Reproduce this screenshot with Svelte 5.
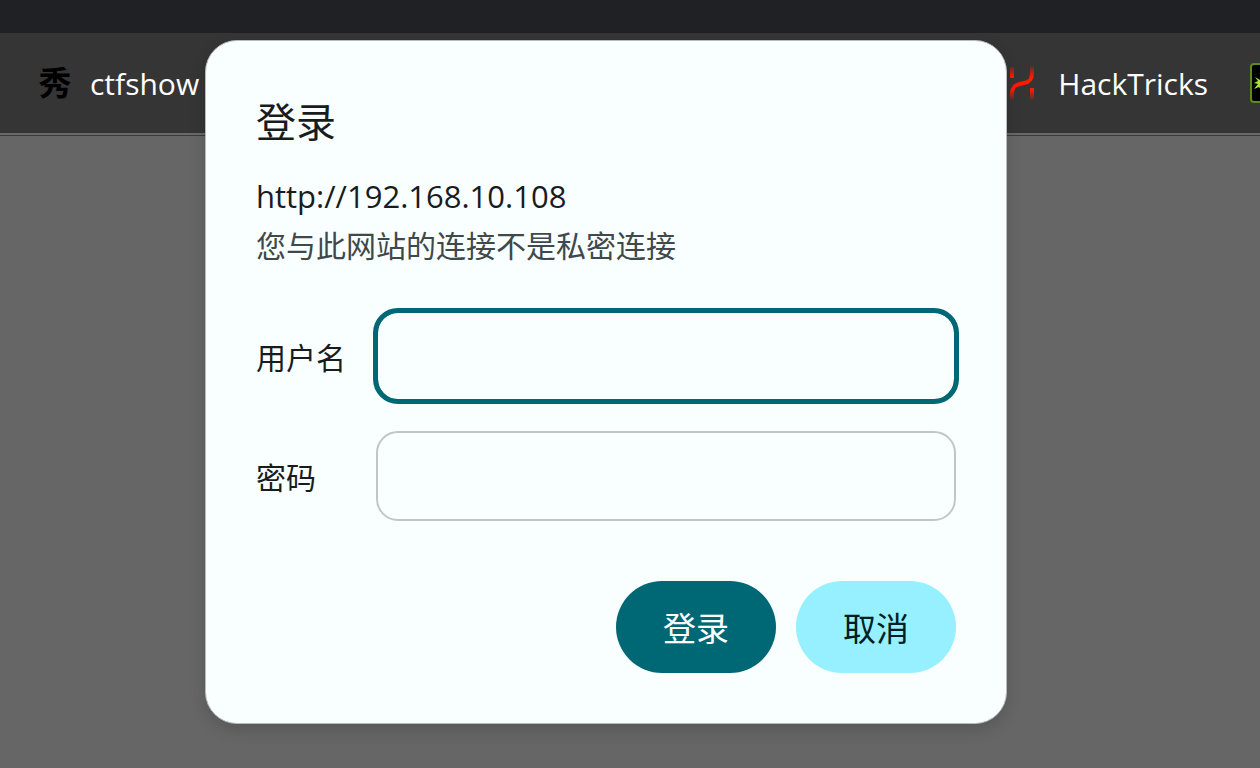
<script lang="ts">
  let username = '';
  let password = '';
</script>

<div class="browser">
  <div class="tabstrip"></div>
  <nav class="bookmarks">
    <a class="bookmark" href="#ctfshow">
      <span class="seal" aria-hidden="true">秀</span>
      <span>ctfshow</span>
    </a>
    <div class="group">
      <a class="bookmark" href="#hacktricks">
        <svg viewBox="0 0 30 40" width="30" height="40">
          <defs>
            <linearGradient id="flame" gradientUnits="userSpaceOnUse" x1="0" y1="3" x2="0" y2="37">
              <stop offset="0" stop-color="#ff1a00" stop-opacity="0.1" />
              <stop offset="0.3" stop-color="#ff1a00" />
              <stop offset="0.7" stop-color="#ff1a00" />
              <stop offset="1" stop-color="#ff1a00" stop-opacity="0.1" />
            </linearGradient>
          </defs>
          <g fill="none" stroke="url(#flame)" stroke-width="4">
            <path d="M4 37 V31 C4 25 6 22 12 21 L16 20 C22 19 24 16 24 10 V3" />
            <path d="M2 4 h4 v11 h-4 z M22 25 h4 v12 h-4 z" fill="url(#flame)" stroke="none" />
          </g>
        </svg>
        <span>HackTricks</span>
      </a>
      <a class="bookmark clipped" href="#more" aria-label="More bookmarks">
        <svg viewBox="0 0 40 40" width="40" height="40">
          <rect x="1" y="1" width="38" height="38" rx="3" fill="#000" stroke="#5c8a1e" stroke-width="2" />
          <path d="M5 14 L10 17 L32 14 L26 20 L34 23 L24 26 L12 28 L9 24 L4 26 L8 21 L4 20 L8 18 Z" fill="#a5e33c" />
        </svg>
      </a>
    </div>
  </nav>
  <main class="page"></main>

  <form class="dialog" role="dialog" aria-labelledby="title" on:submit|preventDefault>
    <h1 id="title">登录</h1>
    <p class="origin">http://192.168.10.108</p>
    <p class="warning">您与此网站的连接不是私密连接</p>
    <div class="fields">
      <label for="username">用户名</label>
      <input id="username" class="active" type="text" bind:value={username} />
      <label for="password">密码</label>
      <input id="password" type="password" bind:value={password} />
    </div>
    <div class="actions">
      <button type="submit" class="primary">登录</button>
      <button type="button">取消</button>
    </div>
  </form>
</div>

<style>
  :global(body) {
    margin: 0;
    background: #666;
  }

  .browser {
    position: relative;
    display: flex;
    flex-direction: column;
    min-height: 100vh;
    overflow: hidden;
    font-family: 'Open Sans', 'Noto Sans CJK SC', sans-serif;
    font-size: 30px;
    color: #191c1d;
  }

  .tabstrip {
    height: 33px;
    background: #202124;
  }

  .bookmarks {
    display: flex;
    justify-content: space-between;
    height: 100px;
    padding-left: 40px;
    background: #353535;
    border-bottom: 2px solid #696969;
  }

  .group {
    display: flex;
    gap: 42px;
  }

  .bookmark {
    display: flex;
    align-items: center;
    gap: 20px;
    color: #fff;
    text-decoration: none;
  }

  .bookmark svg {
    flex: none;
  }

  .seal {
    display: flex;
    justify-content: center;
    width: 30px;
    font-size: 33px;
    font-weight: 700;
    line-height: 40px;
    color: #000;
  }

  .clipped {
    width: 10px;
    overflow: hidden;
  }

  .page {
    flex: 1;
    background: #666;
    border-top: 1px solid #3a3a3a;
  }

  .dialog {
    position: absolute;
    top: 40px;
    left: 0;
    right: 48px;
    box-sizing: border-box;
    max-width: 802px;
    margin: 0 auto;
    padding: 50px;
    background: #f8fffe;
    border: 1px solid #b5bcbc;
    border-radius: 32px;
    box-shadow: 0 6px 16px rgba(0, 0, 0, 0.14);
  }

  h1 {
    margin: 0 0 18px;
    font-size: 40px;
    font-weight: 400;
    line-height: 62px;
  }

  p {
    margin: 0;
  }

  .origin {
    font-size: 31px;
    line-height: 50px;
  }

  .warning {
    line-height: 50px;
    color: #3f484a;
  }

  .fields {
    display: grid;
    grid-template-columns: 120px 1fr;
    align-items: center;
    row-gap: 30px;
    margin-top: 40px;
  }

  input {
    box-sizing: border-box;
    width: 100%;
    height: 90px;
    padding: 0 24px;
    font: inherit;
    color: inherit;
    background: transparent;
    border: 2px solid #c0c6c6;
    border-radius: 22px;
    outline: none;
  }

  input.active {
    border-color: #006874;
    outline: 5px solid #006874;
    outline-offset: -2px;
  }

  .actions {
    display: flex;
    justify-content: flex-end;
    gap: 20px;
    margin-top: 60px;
  }

  button {
    width: 160px;
    height: 92px;
    padding: 0;
    font-family: inherit;
    font-size: 33px;
    color: #001f24;
    background: #97f0ff;
    border: none;
    border-radius: 46px;
    cursor: pointer;
  }

  .primary {
    color: #fff;
    background: #006874;
  }
</style>
